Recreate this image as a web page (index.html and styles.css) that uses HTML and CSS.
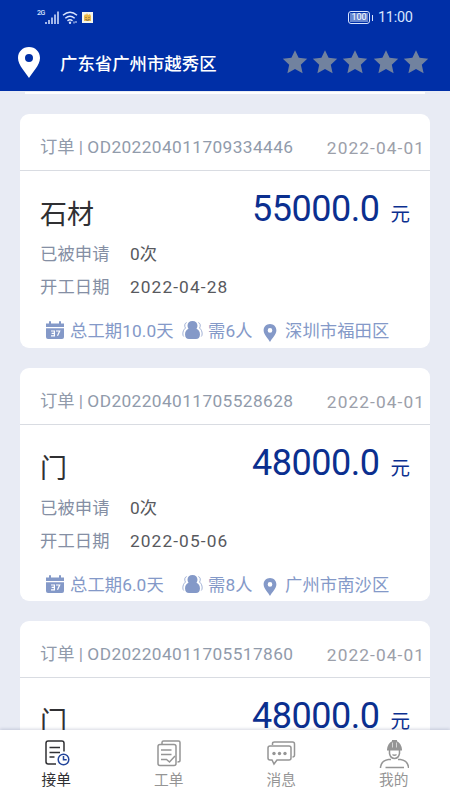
FILE: index.html
```html
<!DOCTYPE html>
<html lang="zh-CN">
<head>
<meta charset="utf-8">
<meta name="viewport" content="width=device-width, initial-scale=1">
<title>接单</title>
<link rel="stylesheet" href="styles.css">
</head>
<body>
<svg class="defs" width="0" height="0" aria-hidden="true">
  <symbol id="star" viewBox="0 0 26 26"><path d="M13 1.200l3.600 7.600 8.600.9-6.400 6 1.800 8.600-7.600-4.200-7.600 4.200 1.800-8.600-6.400-6 8.600-.9z"/></symbol>
  <symbol id="calendar" viewBox="0 0 20 20"><path d="M1 3.500h3V1.300h2v2.200h8V1.300h2v2.200h3v3.600H1z"/><path d="M1 8.200h18V17q0 2-2 2H3q-2 0-2-2z"/><path d="M6 11h3.400v4.800H6m.6-2.500h2.800M11 11h3.700l-2.200 4.800" fill="none" stroke="#fff" stroke-width="1.200"/></symbol>
  <symbol id="people" viewBox="0 0 22 20"><path d="M11 .6c3.200 0 5.200 2.100 5.200 4.800 0 1.500-.4 2.500-1 3.300 2.400 1.300 3.600 3.200 3.600 5.900 0 3.200-1.700 4.700-4.100 4.700H7.300c-2.400 0-4.100-1.500-4.100-4.700 0-2.700 1.200-4.600 3.600-5.900-.6-.8-1-1.800-1-3.300C5.800 2.700 7.800.6 11 .6z"/><path d="M4.900 2.200C2.700 2.900 2.300 5.500 3.600 8 1.800 9.600.9 11.400.9 14c0 1.300.3 2.200.9 2.800M17.100 2.200c2.200.7 2.600 3.300 1.300 5.800 1.800 1.600 2.700 3.400 2.700 6 0 1.300-.3 2.200-.9 2.800" fill="none" stroke="currentColor" stroke-width=".8"/></symbol>
  <symbol id="pin" viewBox="0 0 22 31"><path fill-rule="evenodd" d="M11 0C4.700 0 0 4.800 0 10.900 0 18.500 8 25.500 11 31c3-5.500 11-12.500 11-20.100C22 4.800 17.300 0 11 0zm0 7a4 4 0 1 1 0 8 4 4 0 0 1 0-8z"/></symbol>
</svg>
<div class="app">
  <header class="header">
    <div class="status">
      <span class="net">2G</span>
      <svg class="signal" viewBox="0 0 14 13"><path d="M1 11v2M4 9v4M7 6.500V13M10 3.500V13M13 .5V13" stroke="currentColor" stroke-width="1.500"/></svg>
      <svg class="wifi" viewBox="0 0 16 13"><path d="M1 4.300Q8-1.800 15 4.300M3.300 7.200q4.700-4 9.400 0M5.500 9.800q2.500-2 5 0" fill="none" stroke="currentColor" stroke-width="1.500"/><circle cx="8" cy="11.700" r="1.200"/><path d="M12 10.500v2M14 10v2" stroke="currentColor"/></svg>
      <svg class="app-badge" viewBox="0 0 11 11"><path fill="#f4f6ee" d="M0 0h11v11H0z"/><path fill="#e9b848" d="M2 4l1-2 1 1 1-2 1 2 2-1 1 2v5H2z"/><path d="M3.500 5.500h1m2 0h1M3.500 7.500q2 1.500 4 0" stroke="#755f42" fill="none"/></svg>
      <span class="battery"><span class="battery-level">100</span></span>
      <span class="clock">11:00</span>
    </div>
    <div class="location">
      <svg class="location-pin"><use href="#pin"/></svg>
      <h1 class="location-name">广东省广州市越秀区</h1>
      <div class="stars">
        <svg><use href="#star"/></svg><svg><use href="#star"/></svg><svg><use href="#star"/></svg><svg><use href="#star"/></svg><svg><use href="#star"/></svg>
      </div>
    </div>
  </header>

  <main class="orders">
    <article class="card">
      <div class="card-head"><span>订单 | <span class="order-no">OD202204011709334446</span></span><time class="date">2022-04-01</time></div>
      <div class="title-row"><h2 class="title">石材</h2><p class="price"><span class="amount">55000.0</span><span class="unit">元</span></p></div>
      <dl class="facts"><dt>已被申请</dt><dd>0次</dd><dt>开工日期</dt><dd class="day">2022-04-28</dd></dl>
      <div class="meta"><svg class="i-cal"><use href="#calendar"/></svg><span>总工期10.0天</span><svg class="i-people"><use href="#people"/></svg><span>需6人</span><svg class="i-pin"><use href="#pin"/></svg><span>深圳市福田区</span></div>
    </article>
    <article class="card">
      <div class="card-head"><span>订单 | <span class="order-no">OD202204011705528628</span></span><time class="date">2022-04-01</time></div>
      <div class="title-row"><h2 class="title">门</h2><p class="price"><span class="amount">48000.0</span><span class="unit">元</span></p></div>
      <dl class="facts"><dt>已被申请</dt><dd>0次</dd><dt>开工日期</dt><dd class="day">2022-05-06</dd></dl>
      <div class="meta"><svg class="i-cal"><use href="#calendar"/></svg><span>总工期6.0天</span><svg class="i-people"><use href="#people"/></svg><span>需8人</span><svg class="i-pin"><use href="#pin"/></svg><span>广州市南沙区</span></div>
    </article>
    <article class="card">
      <div class="card-head"><span>订单 | <span class="order-no">OD202204011705517860</span></span><time class="date">2022-04-01</time></div>
      <div class="title-row"><h2 class="title">门</h2><p class="price"><span class="amount">48000.0</span><span class="unit">元</span></p></div>
    </article>
  </main>

  <nav class="tabs">
    <a class="tab active">
      <svg viewBox="0 0 30 30"><path d="M23 12.500V4.200Q23 2 20.800 2H7.200Q5 2 5 4.200v18.600Q5 25 7.200 25H15" /><path d="M8.500 8.500H19M8.500 13.500H19M8.500 18h5"/><circle class="accent" cx="22.500" cy="20.500" r="5.300"/><path class="accent" d="M22.500 17v3.700h3.200"/></svg>
      <span>接单</span>
    </a>
    <a class="tab">
      <svg viewBox="0 0 30 30"><path d="M8 5V3.500Q8 2 9.500 2h15Q26 2 26 3.500v18q0 1.500-2.500 1.500"/><rect x="4" y="5.500" width="18" height="21" rx="2"/><path d="M7 11h10.500M7 15.500h10.500M7 20.500h5.500l3 2.500 5.500-6"/></svg>
      <span>工单</span>
    </a>
    <a class="tab">
      <svg viewBox="0 0 30 30"><path d="M6.500 6V4.500q0-1.500 2-1.500h18q2 0 2 2v11q0 2-2 2"/><path d="M4 7h19q2 0 2 2v10q0 2-2 2H11l-3 4-2-4H4q-2 0-2-2V9q0-2 2-2z"/><g class="dots"><circle cx="8" cy="14.500" r="1.700"/><circle cx="13.500" cy="14.500" r="1.700"/><circle cx="19" cy="14.500" r="1.700"/></g></svg>
      <span>消息</span>
    </a>
    <a class="tab">
      <svg viewBox="0 0 30 30"><path class="fill" d="M8 11.500v-1q.8-6.300 5-8.200V1h5v1.300Q22.200 4.200 23 10.500v1z"/><path d="M13.500 3.500v5M17.500 3.500v5" stroke="#fff" stroke-width=".6"/><path d="M10.500 11v3.500q1 5 5 5t5-5V11M13.500 15.500q2 1.500 4 0"/><path d="M1.500 29v-1q1-6.500 8-7.500h2.500M29.500 29v-1q-1-6.500-8-7.500h-2.500M6.500 28.500h18.500"/></svg>
      <span>我的</span>
    </a>
  </nav>
</div>
</body>
</html>
```

FILE: styles.css
```css
* { box-sizing: border-box; margin: 0; padding: 0; }

body {
  font-family: Roboto, "Noto Sans CJK SC", sans-serif;
  font-size: 17.3px;
  background: #e8ebf4;
}

svg { display: block; fill: currentColor; flex: none; }
.defs { position: absolute; }

.app {
  display: flex;
  flex-direction: column;
  height: 800px;
  overflow: hidden;
}

.header {
  flex: none;
  height: 91px;
  background: #002fa7;
  color: #fff;
}

.status {
  display: flex;
  align-items: center;
  height: 34px;
  padding: 0 37px;
  color: #d9e5ff;
}
.net { font-size: 7px; font-weight: 500; align-self: flex-start; margin-top: 9px; width: 8px; letter-spacing: -.5px; }
.signal { width: 14px; height: 13px; }
.wifi { width: 16px; height: 13px; margin-left: 3px; }
.app-badge { width: 11px; height: 11px; margin-left: 4px; }
.battery {
  display: flex;
  position: relative;
  width: 22px;
  height: 13px;
  margin-left: auto;
  padding: 1px;
  border: 1px solid #d9e5ff;
  border-radius: 3px;
}
.battery::after {
  content: "";
  position: absolute;
  right: -4px;
  top: 3px;
  width: 1.5px;
  height: 6px;
  background: #d9e5ff;
}
.battery-level {
  flex: 1;
  background: #6686d0;
  color: #fff;
  font-size: 9px;
  line-height: 9px;
  text-align: center;
}
.clock { width: 35px; margin-left: 8px; font-size: 14.5px; line-height: 18px; padding-top: 1px; letter-spacing: -.3px; white-space: nowrap; }

.location { display: flex; align-items: center; height: 57px; padding: 0 21px 0 18px; }
.location-pin { width: 22px; height: 31px; }
.location-name { margin-left: 20px; padding-top: 2px; font-size: 17.4px; font-weight: 500; line-height: 26px; }
.stars { display: flex; gap: 4.3px; margin: -1px 0 0 auto; color: #71829f; }
.stars svg { width: 26px; height: 26px; }

.orders {
  flex: 1;
  min-height: 0;
  overflow: hidden;
  display: flex;
  flex-direction: column;
  gap: 20px;
  padding: 0 20px;
}
.orders::before {
  content: "";
  flex: none;
  height: 2px;
  margin: 1px 5px -.2px;
  background: #fff;
}

.card {
  flex: none;
  height: 233.8px;
  background: #fff;
  border-radius: 9px;
}
.card-head {
  display: flex;
  justify-content: space-between;
  height: 57px;
  padding: 0 6px 0 20px;
  border-bottom: 1px solid #d9dce2;
  color: #919bab;
  line-height: 67px;
  white-space: nowrap;
}
.order-no { letter-spacing: .4px; }
.date { color: #9ca0aa; letter-spacing: 1.1px; margin-right: -1.1px; line-height: 69.5px; }

.title-row {
  display: flex;
  justify-content: space-between;
  height: 65px;
  padding: 0 20px;
}
.title { font-size: 27px; font-weight: 400; line-height: 88px; color: #303033; }
.price { display: flex; color: #0b2f8f; line-height: 76px; }
.amount { font-size: 36px; letter-spacing: -.5px; }
.unit { margin-left: 11px; font-size: 19.5px; line-height: 87px; }

.facts {
  display: grid;
  grid-template-columns: 90px 1fr;
  grid-auto-rows: 33.5px;
  padding-left: 20px;
  line-height: 36px;
}
.facts dt { color: #858fa4; letter-spacing: .15px; }
.facts dd { color: #58595e; }
.facts .day { letter-spacing: 1.1px; }

.meta {
  display: grid;
  grid-template-columns: 25px 112px 26px 54px 23px 1fr;
  align-items: center;
  height: 45px;
  padding: 11px 0 0 25px;
  color: #8499c8;
  line-height: 26px;
  white-space: nowrap;
}
.meta span { letter-spacing: .1px; }
.i-cal { width: 20px; height: 20px; margin-top: -2px; }
.i-people { width: 21px; height: 20px; margin-top: -2px; }
.i-pin { width: 14px; height: 18px; margin: 4px 0 0 1px; }

.tabs {
  flex: none;
  display: flex;
  position: relative;
  height: 70px;
  background: #fff;
  box-shadow: 0 -1px 3px rgba(50, 60, 110, .2);
}
.tab {
  flex: 1;
  display: flex;
  flex-direction: column;
  align-items: center;
  padding-top: 9px;
  color: #959595;
  font-size: 14.7px;
  line-height: 23px;
}
.tab svg { width: 30px; height: 30px; fill: none; stroke: currentColor; stroke-width: 1.5; }
.tab .dots, .tab .fill { fill: currentColor; stroke: none; }
.active { color: #303033; }
.active .accent { stroke: #24469b; }
```
